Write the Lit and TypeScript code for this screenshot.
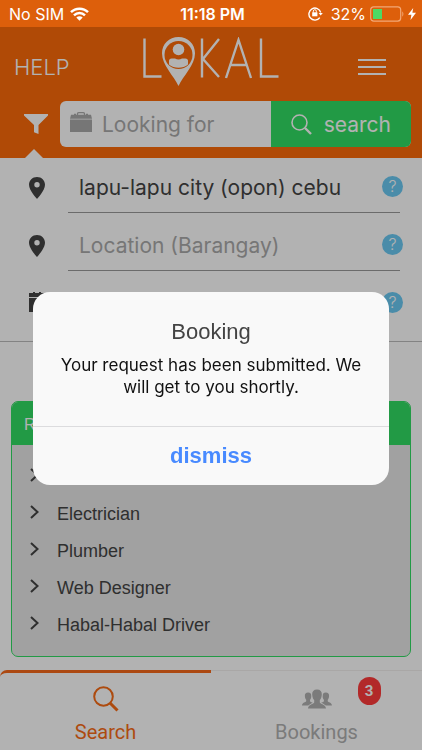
import { LitElement, html, css, svg } from "lit";
import { customElement, property } from "lit/decorators.js";

const pin = html`<svg class="pin" viewBox="0 0 16 22" aria-hidden="true">
  <path fill="currentColor" fill-rule="evenodd" d="M8 0C3.400 0 0 3.400 0 7.800 0 13.500 8 22 8 22s8-8.500 8-14.200C16 3.400 12.600 0 8 0zm0 5.100a2.700 2.700 0 1 1 0 5.400 2.700 2.700 0 0 1 0-5.400z"/>
</svg>`;

const person = (x: number, s: number, y: number) => svg`<g transform="translate(${x} ${y}) scale(${s})">
  <path d="M9 0c3.400 0 5 2 4.800 5-.1 2.600-1 4.600-2 5.600v2.300c.4 1.400 6 1.800 6.200 6.100H0c.2-4.300 5.800-4.700 6.200-6.100v-2.300c-1-1-1.900-3-2-5.600C4 2 5.600 0 9 0z"/></g>`;

@customElement("help-dot")
export class HelpDot extends LitElement {
  @property() label = "";

  static styles = css`
    :host { display: block; }
    button {
      display: block; box-sizing: border-box; width: 21px; height: 21px; padding: 0;
      border: 0; border-radius: 50%; background: #6bc9f3; color: #fff;
      font: 300 16px/21px Inter, "Liberation Sans", sans-serif; text-align: center;
    }
  `;

  render() {
    return html`<button type="button" aria-label=${this.label}>?</button>`;
  }
}

@customElement("status-bar")
export class StatusBar extends LitElement {
  static styles = css`
    :host {
      display: grid; grid-template-columns: 1fr auto 1fr; align-items: center;
      height: 27px; padding: 0 6px 0 9px; background: #dd5f0b; color: #fff;
      font: 400 16px/20px Inter, "Liberation Sans", sans-serif;
    }
    .left, .right { display: flex; align-items: center; }
    .left { gap: 6px; }
    .right { justify-content: flex-end; }
    .time { font-weight: 600; }
    .wifi { width: 19px; height: 14px; }
    .lock { width: 15px; height: 15px; margin-right: 8px; }
    .battery { width: 34px; height: 16px; margin: 0 4px; }
    .bolt { width: 8px; height: 12px; }
  `;

  render() {
    return html`
      <div class="left"><span>No SIM</span>
        <svg class="wifi" viewBox="0 0 19 14" fill="none" stroke="#fff" stroke-width="2.500" aria-hidden="true">
          <path d="M1 5.200C5.600.600 13.400.600 18 5.200M4 8.300c3.100-3 7.900-3 11 0"/>
          <path d="M9.500 13.700 6.300 10.500c1.800-1.700 4.600-1.700 6.400 0z" fill="#fff" stroke="none"/>
        </svg>
      </div>
      <span class="time">11:18 PM</span>
      <div class="right">
        <svg class="lock" viewBox="0 0 15 15" fill="none" stroke="#fff" stroke-width="1.400" aria-hidden="true">
          <path d="M11.800 11.600A6 6 0 1 1 12.700 6.500"/><path d="M10.600 7h4.200l-2.100 2.600z" fill="#fff" stroke="none"/>
          <rect x="4.200" y="6.300" width="5.200" height="4" fill="#fff" stroke="none"/>
          <path d="M5.300 6.600V5.200a1.500 1.500 0 0 1 3 0v1.400" stroke-width="1"/>
        </svg>
        <span>32%</span>
        <svg class="battery" viewBox="0 0 34 16" aria-hidden="true">
          <rect x=".7" y=".9" width="30" height="14.200" rx="3" fill="none" stroke="#f2a877" stroke-width="1.200"/>
          <rect x="3" y="3" width="9" height="10" fill="#4cd964"/>
          <path d="M32.300 5.500c1.400.6 1.400 4.400 0 5z" fill="#f2a877"/>
        </svg>
        <svg class="bolt" viewBox="0 0 8 12" aria-hidden="true"><path fill="#fff" d="M5.200 0 0 6.800h3.400L2.500 12 8 4.800H4.400z"/></svg>
      </div>`;
  }
}

@customElement("booking-alert")
export class BookingAlert extends LitElement {
  static styles = css`
    :host {
      display: flex; align-items: center; position: fixed; inset: 27px 0 0;
      padding: 0 33px; background: rgba(0, 0, 0, 0.3);
      font-family: Inter, "Liberation Sans", sans-serif;
    }
    .box { flex: 1; border-radius: 17px; background: #f9f9f9; overflow: hidden; text-align: center; }
    h2 { margin: 0; padding: 26px 16px 0; color: #444; font: 400 22px/28px "Liberation Sans", sans-serif; }
    p { margin: 0; padding: 8px 24px 28px; color: #111; font-size: 17px; line-height: 22px; }
    button {
      display: block; width: 100%; height: 59px; padding: 0; border: 0; border-top: 1px solid #dcdcde;
      background: none; color: #488aff; font: 700 22px/28px "Liberation Sans", sans-serif;
    }
  `;

  render() {
    return html`<div class="box" role="alertdialog" aria-modal="true" aria-labelledby="title" aria-describedby="message">
      <h2 id="title">Booking</h2>
      <p id="message">Your request has been submitted. We will get to you shortly.</p>
      <button type="button">dismiss</button>
    </div>`;
  }
}

@customElement("app-root")
export class AppRoot extends LitElement {
  private jobs = ["", "Electrician", "Plumber", "Web Designer", "Habal-Habal Driver"];

  static styles = css`
    :host {
      display: flex; flex-direction: column; min-height: 100vh; background: #fff; color: #444;
      font-family: Inter, "Liberation Sans", sans-serif;
    }
    * { box-sizing: border-box; }
    button, input { font-family: inherit; }
    button { border: 0; padding: 0; background: none; color: inherit; }
    input { min-width: 0; border: 0; padding: 0; background: none; color: inherit; outline: 0; }
    header { background: #fd6a09; color: #fff; }
    .brand {
      display: grid; grid-template-columns: 1fr auto 1fr; align-items: center;
      height: 74px; padding: 0 36px 0 14px;
    }
    .help { justify-self: start; padding-top: 6px; font-size: 22px; line-height: 28px; font-weight: 300; }
    .logo { width: 138px; height: 50px; margin: 0 0 4px 22px; }
    .menu { justify-self: end; padding-top: 6px; }
    .menu svg { display: block; width: 28px; height: 18px; }
    .finder { display: grid; grid-template-columns: 49px 1fr; padding: 0 11px 11px; }
    .filter { position: relative; display: grid; place-items: center; }
    .filter svg { width: 24px; height: 20px; }
    .filter::after {
      content: ""; position: absolute; left: 14px; bottom: -11px;
      border: 9px solid transparent; border-top: 0; border-bottom-color: #fff;
    }
    .search { display: grid; grid-template-columns: 3fr 2fr; height: 46px; border-radius: 6px; overflow: hidden; background: #fff; }
    .what { min-width: 0; display: flex; align-items: center; gap: 10px; padding-left: 10px; color: #aaa; }
    .case { flex: none; width: 22px; height: 20px; margin-bottom: 4px; }
    .what input { flex: 1; font-size: 21px; color: #444; }
    input::placeholder { color: #aaa; opacity: 1; }
    .go {
      display: flex; align-items: center; justify-content: center; gap: 12px;
      background: #32dd63; color: #fff; font-size: 21px;
    }
    .go svg { width: 21px; height: 21px; }
    main { flex: 1; }
    .place { display: grid; gap: 8px; padding: 5px 19px 16px 0; border-bottom: 1px solid #bcbcbc; }
    .row { position: relative; display: grid; grid-template-columns: 68px 1fr; align-items: center; height: 50px; }
    .row.last { height: 46px; }
    .mark { display: grid; justify-items: center; padding-left: 5px; }
    .pin { width: 16px; height: 22px; }
    .cal { width: 16px; height: 20px; }
    .row input { height: 50px; padding: 0 36px 0 11px; margin-right: 3px; font-size: 21px; border-bottom: 1px solid #9a9a9a; }
    .row.last input { height: 46px; border: 0; }
    help-dot { position: absolute; top: 13px; right: 0; }
    .panel { margin: 59px 11px 13px; border: 1px solid #32dd63; border-radius: 7px; overflow: hidden; background: #e7e7e7; }
    .panel h2 {
      margin: 0; padding: 3px 12px 0; height: 43px; background: #32dd63; color: #fff;
      font: 300 16px/40px "Liberation Sans", sans-serif;
    }
    ul { margin: 0; padding: 13px 0; list-style: none; }
    li a {
      display: grid; grid-template-columns: 28px 1fr; align-items: center; height: 37px; padding-left: 17px;
      color: inherit; text-decoration: none; font: 18px/24px "Liberation Sans", sans-serif;
    }
    li svg { width: 11px; height: 14px; margin-bottom: 4px; }
    footer { display: grid; grid-template-columns: 1fr 1fr; height: 80px; font-family: Roboto, sans-serif; }
    .tab {
      position: relative; display: grid; justify-items: center; align-content: end; gap: 8px;
      padding-bottom: 6px; border-top: 1px solid #f3f0ee; color: #b0b0b0; text-decoration: none;
      font-size: 20px; line-height: 24px;
    }
    .tab.on { border-top: 3px solid #f6691a; border-radius: 7px 0 0 0; color: #f86c16; }
    .tab svg { width: 28px; height: 26px; }
    .tab .people { width: 30px; height: 20px; margin-bottom: 3px; }
    .count {
      position: absolute; top: 6px; left: calc(50% + 41px); width: 23px; height: 28px; border-radius: 12px;
      background: #ff3c3c; color: #fff; text-align: center; font-size: 15px; line-height: 28px; font-weight: 700;
    }
    status-bar { position: relative; z-index: 2; }
    booking-alert { z-index: 1; }
  `;

  render() {
    return html`
      <status-bar></status-bar>
      <header>
        <div class="brand">
          <button class="help" type="button">HELP</button>
          <svg class="logo" viewBox="0 0 138 50" role="img" aria-label="Lokal" fill="none" stroke="#fff" stroke-width="2.400">
            <path d="M2.500 1.500v38h17M60 1.500v39M77 2 61 22l16 18M84 41 96.500 3 109 41M88 28h17M119 1.500v38h17.500"/>
            <path d="M36.500 0C27 0 20 7.200 20 16.200 20 28 32 39 36.500 49 41 39 53 28 53 16.200 53 7.200 46 0 36.500 0z" fill="#fff" stroke="none"/>
            <circle cx="36.500" cy="18" r="14" fill="#fd6a09" stroke="none"/>
            <circle cx="36.500" cy="12.500" r="5.800" fill="#fff" stroke="none"/>
            <path d="M27 23.500q.3-2 2.500-2h3.500q3.500 2 7 0h3.500q2.200 0 2.500 2v4c-5 4.300-14 4.300-19 0z" fill="#fff" stroke="none"/>
          </svg>
          <button class="menu" type="button" aria-label="Menu">
            <svg viewBox="0 0 28 18" stroke="#fff" stroke-width="2"><path d="M0 2h28M0 9h28M0 16h28"/></svg>
          </button>
        </div>
        <div class="finder">
          <button class="filter" type="button" aria-label="Filter">
            <svg viewBox="0 0 24 20"><path fill="#fff" d="M0 0h24v1.500L14.500 11v9L10 18.300V11L0 1.500z"/></svg>
          </button>
          <form class="search">
            <label class="what">
              <svg class="case" viewBox="0 0 22 20" aria-hidden="true">
                <path fill="none" stroke="currentColor" stroke-width="1.300" d="M7.500 3V1.800Q7.500.7 8.600.7h4.800q1.100 0 1.100 1.100V3"/>
                <path fill="currentColor" d="M1 2.800h3v-1h2v1h10v-1h2v1h3l1 4H0zM0 7.500h22V20H0z"/>
              </svg>
              <input type="text" placeholder="Looking for" aria-label="Looking for">
            </label>
            <button class="go" type="button">
              <svg viewBox="0 0 21 21" fill="none" stroke="#fff" aria-hidden="true">
                <circle cx="8.500" cy="8.500" r="7.500" stroke-width="1.600"/><path d="m14 14 6 6" stroke-width="2.400"/>
              </svg>search
            </button>
          </form>
        </div>
      </header>
      <main>
        <form class="place">
          <div class="row"><span class="mark">${pin}</span>
            <input type="text" aria-label="City" value="lapu-lapu city (opon) cebu">
            <help-dot label="About city"></help-dot></div>
          <div class="row"><span class="mark">${pin}</span>
            <input type="text" aria-label="Location" placeholder="Location (Barangay)">
            <help-dot label="About location"></help-dot></div>
          <div class="row last"><span class="mark">
              <svg class="cal" viewBox="0 0 16 20" aria-hidden="true"><path fill="currentColor" d="M0 1h4V0h2v1h4V0h2v1h4v4H0zM0 6h16v14H0z"/></svg></span>
            <input type="text" aria-label="Date">
            <help-dot label="About date"></help-dot></div>
        </form>
        <section class="panel">
          <h2>R</h2>
          <ul>
            ${this.jobs.map((job) => html`<li><a href="#">
              <svg viewBox="0 0 11 14" fill="none" stroke="currentColor" stroke-width="2" aria-hidden="true"><path d="m2 1 6.500 6L2 13"/></svg>
              <span>${job}</span></a></li>`)}
          </ul>
        </section>
      </main>
      <footer>
        <a class="tab on" href="#">
          <svg viewBox="0 0 28 26" fill="none" stroke="currentColor" aria-hidden="true">
            <circle cx="11.500" cy="10.500" r="9.300" stroke-width="2"/><path d="m18 17 7.500 7.500" stroke-width="3"/>
          </svg>
          <span>Search</span>
        </a>
        <a class="tab" href="#">
          <svg class="people" viewBox="0 0 30 20" fill="currentColor" aria-hidden="true">
            ${person(0, 0.68, 3.5)}${person(17.7, 0.68, 3.5)}
            <g stroke="#fff" stroke-width="1.600" paint-order="stroke">${person(6, 1, 0.5)}</g>
          </svg>
          <span>Bookings</span>
          <span class="count">3</span>
        </a>
      </footer>
      <booking-alert></booking-alert>`;
  }
}
